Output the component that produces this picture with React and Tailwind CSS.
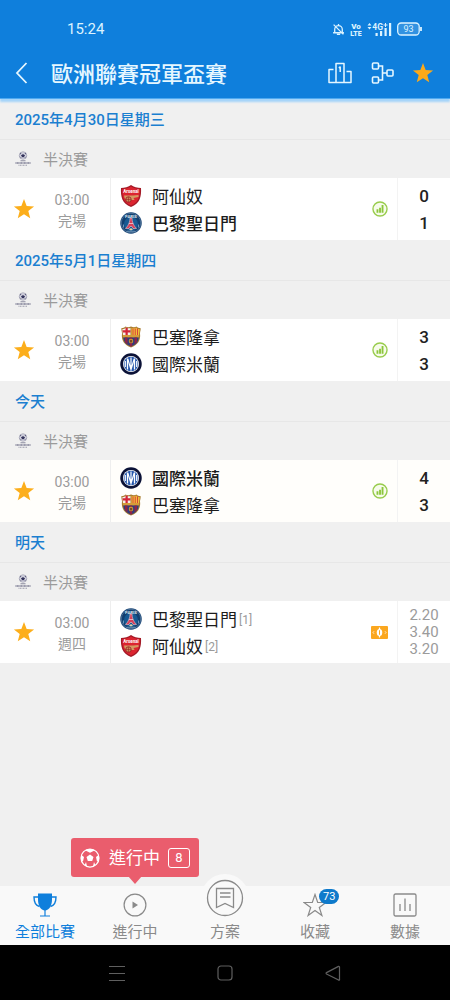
import React from "react";

const STAR = "M12 1.2 14.9 8.7 23 9.2 16.7 14.3 18.8 22.2 12 17.8 5.2 22.2 7.3 14.3 1 9.2 9.1 8.7Z";

function Star({ className }) {
  return (
    <svg viewBox="0 0 24 24" className={className} aria-hidden="true">
      <path d={STAR} fill="currentColor" />
    </svg>
  );
}

function Arsenal() {
  return (
    <svg viewBox="0 0 44 44" className="size-[22px]" aria-hidden="true">
      <path d="M2 6C9 6 17 4 22 0c5 4 13 6 20 6 1 17-2 31-20 38C4 37 1 23 2 6Z" fill="#a31a26" />
      <path d="M4.500 8C11 8 18 6 22 3c4 3 11 5 17.500 5C40 23 37 35 22 41 7 35 4 23 4.500 8Z" fill="#dc2430" />
      <text x="22" y="15.500" textAnchor="middle" fontSize="9" fontWeight="700" fill="#fff" fontFamily="Roboto, sans-serif">Arsenal</text>
      <path d="M8 21h18l11-1v4l-10 2 2 4H13l-4-4Z" fill="#d59a62" />
      <circle cx="17" cy="29" r="5.500" fill="#c98d55" stroke="#8f1720" strokeWidth="1.500" />
      <path d="M17 24v10M12 29h10" stroke="#8f1720" strokeWidth="1" />
    </svg>
  );
}

function Paris() {
  return (
    <svg viewBox="0 0 44 44" className="size-[22px]" aria-hidden="true">
      <circle cx="22" cy="22" r="21.500" fill="#123f70" />
      <circle cx="22" cy="22" r="19.500" fill="none" stroke="#7f9dba" strokeWidth="1" />
      <circle cx="22" cy="24" r="14" fill="#175a93" />
      <text x="22" y="11.500" textAnchor="middle" fontSize="8.500" fontWeight="700" fill="#dfe8f1" fontFamily="Roboto, sans-serif">PARIS</text>
      <path d="M20 12h4c0 8 3 15 9 21h-7l-2-4h-4l-2 4h-7c6-6 9-13 9-21Z" fill="#d5405a" stroke="#f0d9df" strokeWidth="1" />
      <path d="M17.500 23h9" stroke="#f3d7dc" strokeWidth="1.500" />
      <path d="m18 35 4-3 4 3-4 2Z" fill="#dfd3a5" />
      <path d="M7 25v6M37 25v6M13 38.500h18" stroke="#8fb3d2" strokeWidth="1.500" />
    </svg>
  );
}

function Barcelona() {
  return (
    <svg viewBox="0 0 44 44" className="size-[22px]" aria-hidden="true">
      <path d="M3 4c3 0 6-1 8-3 3 2 7 2 11 0 4 2 8 2 11 0 2 2 5 3 8 3 1 4-1 7-1 11 2 14-5 23-18 28C9 38 2 29 4 15 4 11 2 8 3 4Z" fill="#a97c30" />
      <path d="M5 6c3 0 5-1 7-3 3 2 6 2 9 1v14H6C6 13 4 11 5 6Z" fill="#f4efe8" />
      <path d="M11 3.500h4.500V18H11ZM5 8.500h16v4.500H5.500Z" fill="#d32638" />
      <path d="M23 4c3 1 6 1 9-1 2 2 4 3 7 3 1 4-1 6-1 12H23Z" fill="#f2bd3a" />
      <path d="M25 5h2v13h-2ZM29.500 5h2v13h-2ZM34 5h2v13h-2Z" fill="#d8443a" />
      <path d="M6 18h32v5H6Z" fill="#d59c38" />
      <path d="M6.500 23h31C37 32 31 38 22 41 13 38 7 32 6.500 23Z" fill="#2c3f7c" />
      <path d="M10 23h5v14l-5-5ZM19.500 23h5v17l-2.500 1-2.500-1ZM29 23h5v9l-5 5Z" fill="#8f2347" />
      <circle cx="22" cy="30" r="4.500" fill="#dba43a" />
      <path d="m22 27 3 2-1 4h-4l-1-4Z" fill="#7b4a22" />
    </svg>
  );
}

function Inter() {
  return (
    <svg viewBox="0 0 44 44" className="size-[22px]" aria-hidden="true">
      <circle cx="22" cy="22" r="21.500" fill="#0b1237" />
      <circle cx="22" cy="22" r="16" fill="#fff" />
      <circle cx="22" cy="22" r="14.500" fill="#2456ab" />
      <path d="M10.500 16v12M15 11v22M29 11v22M33.500 16v12" stroke="#fff" strokeWidth="2.600" />
      <path d="M22 9v26M15.500 12 22 33l6.500-21" stroke="#fff" strokeWidth="2.400" fill="none" />
    </svg>
  );
}

const TEAMS = {
  arsenal: { name: "阿仙奴", Logo: Arsenal },
  paris: { name: "巴黎聖日門", Logo: Paris },
  barcelona: { name: "巴塞隆拿", Logo: Barcelona },
  inter: { name: "國際米蘭", Logo: Inter },
};

const DAYS = [
  { date: "2025年4月30日星期三", status: "完場", teams: [{ id: "arsenal", score: 0 }, { id: "paris", score: 1, win: true }] },
  { date: "2025年5月1日星期四", status: "完場", teams: [{ id: "barcelona", score: 3 }, { id: "inter", score: 3 }] },
  { date: "今天", status: "完場", recent: true, teams: [{ id: "inter", score: 4, win: true }, { id: "barcelona", score: 3 }] },
  { date: "明天", status: "週四", odds: ["2.20", "3.40", "3.20"], teams: [{ id: "paris", seed: 1 }, { id: "arsenal", seed: 2 }] },
];

function ChampionsLogo() {
  return (
    <svg viewBox="0 0 32 32" className="size-4" aria-hidden="true">
      <circle cx="16" cy="9" r="7.500" fill="#dcdce6" stroke="#77778f" strokeWidth="1" />
      <path d="m16 5 1.500 2.500 3 .5-2 2.500.5 3-3-1.500-3 1.500.5-3-2-2.500 3-.5ZM10 4l3 1-2 2ZM22 4l-3 1 2 2ZM9 11l2 1v2ZM23 11l-2 1v2Z" fill="#34345c" />
      <path d="M11 19.500h10" stroke="#8b8b9f" strokeWidth="2" />
      <path d="M1 24h30" stroke="#74748d" strokeWidth="3" strokeDasharray="2 .8" />
      <path d="M7 28.500h18" stroke="#9a9aab" strokeWidth="2" strokeDasharray="2 1" />
    </svg>
  );
}

function StatsIcon() {
  return (
    <svg viewBox="0 0 30 30" className="size-4" aria-hidden="true">
      <circle cx="15" cy="15" r="13.200" fill="#f6fbea" stroke="#98cc4c" strokeWidth="2.600" />
      <path d="M8.500 15.500H12V22H8.500ZM13.300 12.500h3.500V22h-3.500ZM18 7.500h3.500V22H18Z" fill="#8cc63c" />
    </svg>
  );
}

function OddsIcon() {
  return (
    <svg viewBox="0 0 34 26" className="h-[13px] w-[17px]" aria-hidden="true">
      <rect width="34" height="26" rx="2" fill="#fba71f" />
      <ellipse cx="17" cy="13" rx="5.500" ry="7" fill="#fff" />
      <path d="M17 3v20" stroke="#fff" strokeWidth="2.500" />
      <path d="M17 8.500v9" stroke="#fba71f" strokeWidth="2" />
      <path d="m6 10.500-2 2.500 2 2.500M28 10.500l2 2.500-2 2.500" stroke="#fff" strokeWidth="1.500" fill="none" />
    </svg>
  );
}

function Match({ match }) {
  return (
    <article className={`flex h-[62px] items-stretch ${match.recent ? "bg-[#fffefb]" : "bg-white"}`}>
      <div className="flex w-[111px] shrink-0 items-center border-r border-[#eeeeee]">
        <button type="button" aria-label="收藏" className="flex w-12 justify-center text-[#fcae1b]">
          <Star className="size-[22px]" />
        </button>
        <div className="w-12 pt-[3px] text-center text-sm leading-[21px] text-[#9b9b9b]">
          <p>03:00</p>
          <p>{match.status}</p>
        </div>
      </div>
      <div className="flex min-w-0 flex-1 flex-col justify-center pl-[9px]">
        {match.teams.map((t) => {
          const { name, Logo } = TEAMS[t.id];
          return (
            <div key={t.id} className="flex h-[27px] items-center">
              <Logo />
              <span className={`ml-[10px] whitespace-nowrap pt-[3px] text-[17px] leading-6 text-[#1c1c1c] ${t.win ? "font-medium" : "font-normal"}`}>{name}</span>
              {t.seed && <span className="ml-0.5 pt-[3px] text-xs text-[#9b9b9b]">[{t.seed}]</span>}
            </div>
          );
        })}
      </div>
      <div className="flex w-[35px] shrink-0 items-center justify-center">{match.odds ? <OddsIcon /> : <StatsIcon />}</div>
      {match.odds ? (
        <div className="flex w-[53px] shrink-0 flex-col justify-center border-l border-[#f3f3f3] pt-px text-center text-[15px] leading-[17px] text-[#9b9b9b]">
          {match.odds.map((o) => <p key={o}>{o}</p>)}
        </div>
      ) : (
        <div className="flex w-[53px] shrink-0 flex-col justify-center border-l border-[#f3f3f3] pt-px text-center text-[17px] font-medium leading-[27px] text-[#222222]">
          {match.teams.map((t) => <p key={t.id}>{t.score}</p>)}
        </div>
      )}
    </article>
  );
}

function StatusBar() {
  return (
    <div className="flex h-12 items-center pl-[67px] pr-7 pt-2.5 text-[#dcf3ff]">
      <span className="text-[15px] leading-5">15:24</span>
      <div className="ml-auto flex items-center gap-[5px]">
        <svg viewBox="0 0 24 24" className="size-[13px]" fill="none" stroke="currentColor" strokeWidth="2.400" aria-hidden="true">
          <path d="M12 2v3M5 18V12a7 7 0 0 1 14 0v6M2 18h20M9 21h6M3 3l18 18" />
        </svg>
        <svg viewBox="0 0 12 14" className="h-[14px] w-3" fill="currentColor" fontFamily="Roboto, sans-serif" fontWeight="900" aria-hidden="true">
          <text x="6" y="6.500" fontSize="8" textAnchor="middle">Vo</text>
          <text x="6" y="13.500" fontSize="7" textAnchor="middle">LTE</text>
        </svg>
        <svg viewBox="0 0 25 14" className="h-[14px] w-[25px]" fill="currentColor" aria-hidden="true">
          <path d="m2.500 1 2 2.500h-4ZM2.500 7.500l2-2.500h-4ZM8.500 11h2.200v3H8.500ZM13 9h2.200v5H13ZM17.500 6h2.200v8h-2.200ZM22 1h2.200v13H22Z" />
          <text x="5.300" y="7.500" fontSize="8.500" fontWeight="700" fontFamily="Roboto, sans-serif">4G</text>
          <path d="M16.500 3h4M18.500 1v4" stroke="currentColor" strokeWidth="1" />
        </svg>
        <svg viewBox="0 0 25 14" className="h-[14px] w-[25px]" fill="none" stroke="currentColor" aria-hidden="true">
          <rect x=".7" y="1" width="21.500" height="12" rx="3.500" strokeWidth="1.300" fill="#fff" fillOpacity=".15" />
          <path d="M24 5v4" strokeWidth="1.800" />
          <text x="11.500" y="10.300" textAnchor="middle" fontSize="9" fill="currentColor" stroke="none" fontFamily="Roboto, sans-serif">93</text>
        </svg>
      </div>
    </div>
  );
}

function Header() {
  return (
    <header className="relative z-10 border-b border-[#4fa9f0] bg-[#0f7fdc] shadow-[0_3px_2px_#a3d4fa]">
      <StatusBar />
      <div className="flex h-[50px] items-center pl-3 pr-4 text-[#e6f7ff]">
        <button type="button" aria-label="返回" className="flex w-[39px] items-center">
          <svg viewBox="0 0 20 24" className="h-6 w-5" fill="none" stroke="currentColor" strokeWidth="1.800" aria-hidden="true">
            <path d="M14.500 2 5 12l9.500 10" />
          </svg>
        </button>
        <h1 className="whitespace-nowrap pt-[3px] text-[22px] font-medium leading-8">歐洲聯賽冠軍盃賽</h1>
        <div className="ml-auto flex items-center gap-[18px]">
          <button type="button" aria-label="排名">
            <svg viewBox="0 0 24 22" className="h-[22px] w-6" fill="none" stroke="currentColor" strokeWidth="1.500" aria-hidden="true">
              <path d="M8 20.500V1.500h8v19M5.500 7.500H1v13h22V9.500h-4.500M10.800 5.800 12.200 5v5" strokeLinejoin="round" />
            </svg>
          </button>
          <button type="button" aria-label="賽程圖">
            <svg viewBox="0 0 24 22" className="h-[22px] w-6" fill="none" stroke="currentColor" strokeWidth="1.600" aria-hidden="true">
              <rect x="2.500" y="1" width="6" height="6" rx="1" />
              <rect x="2.500" y="15" width="6" height="6" rx="1" />
              <rect x="17" y="8" width="6" height="6" rx="1" />
              <path d="M8.500 4h4v14h-4M12.500 11H17" />
            </svg>
          </button>
          <button type="button" aria-label="收藏賽事" className="text-[#fba919]">
            <Star className="size-[22px]" />
          </button>
        </div>
      </div>
    </header>
  );
}

function LivePopup() {
  return (
    <button type="button" className="absolute bottom-full left-1/2 mb-[9px] flex h-[39px] -translate-x-1/2 items-center whitespace-nowrap rounded-[3px] bg-[#ea5d6d] px-[9px] text-white">
      <svg viewBox="0 0 40 40" className="size-5" aria-hidden="true">
        <circle cx="20" cy="20" r="18" fill="#ea5d6d" stroke="#fff" strokeWidth="2.500" />
        <path d="m20 13 7 5-2.600 8h-8.800L13 18ZM11 5l9 4.500L29 5l-4-3H15ZM38 13l-6 5 2 9 4-2ZM2 13l6 5-2 9-4-2ZM9 35l3-7 2 9ZM31 35l-3-7-2 9Z" fill="#fff" />
      </svg>
      <span className="ml-[9px] pt-px text-[17px] leading-6">進行中</span>
      <span className="ml-2 flex h-5 w-[22px] items-center justify-center rounded-[3px] border border-white text-[13px]">8</span>
      <svg viewBox="0 0 14 8" className="absolute left-1/2 top-full h-[7px] w-[14px] -translate-x-1/2" aria-hidden="true">
        <path d="M0 0h14L7 8Z" fill="#ea5d6d" />
      </svg>
    </button>
  );
}

function NavItem({ label, active, children, popup }) {
  return (
    <div className="relative">
      {popup}
      <a href="#" className={`flex flex-col items-center pt-[7px] ${active ? "text-[#0f7fdc]" : "text-[#8a8a8a]"}`}>
        <span className="relative flex h-6 items-center justify-center">{children}</span>
        <span className="mt-1 whitespace-nowrap text-[15px] leading-[22px]">{label}</span>
      </a>
    </div>
  );
}

function BottomNav() {
  return (
    <nav className="grid grid-cols-5 bg-[#f9f9f9] pb-0.5">
      <NavItem label="全部比賽" active>
        <svg viewBox="0 0 24 24" className="size-6" aria-hidden="true">
          <path d="M5 .5h14v6c0 6-2.500 10-6.400 11v5H17v1H7v-1h4.400v-5C7.500 16.500 5 12.500 5 6.500Z" fill="currentColor" />
          <path d="M5 4H1c0 5 1 8.500 5.500 9.500M19 4h4c0 5-1 8.500-5.500 9.500" fill="none" stroke="currentColor" strokeWidth="1.400" />
        </svg>
      </NavItem>
      <NavItem label="進行中" popup={<LivePopup />}>
        <svg viewBox="0 0 24 24" className="size-6" aria-hidden="true">
          <circle cx="12" cy="12" r="10.900" fill="none" stroke="currentColor" strokeWidth="1.200" />
          <path d="M9.500 8.500v7l5.500-3.500Z" fill="currentColor" />
        </svg>
      </NavItem>
      <NavItem label="方案">
        <span className="absolute -top-[19px] flex size-12 items-center justify-center rounded-full bg-[#f9f9f9]">
          <svg viewBox="0 0 38 38" className="size-[38px]" fill="none" stroke="currentColor" strokeWidth="1.300" aria-hidden="true">
            <circle cx="19" cy="19" r="17.500" />
            <path d="M10.500 9.500h17v19L19 24.500l-8.500 4ZM14 14h10.500M14 18h10.500" />
          </svg>
        </span>
      </NavItem>
      <NavItem label="收藏">
        <svg viewBox="0 0 24 24" className="size-6" fill="none" stroke="currentColor" strokeWidth="1.200" aria-hidden="true">
          <path d="m12 1.500 2.700 8H23l-6.700 4.900 2.600 8.100-6.900-5-6.900 5 2.600-8.100L1 9.500h8.300Z" />
        </svg>
        <span className="absolute -top-1 left-4 rounded-full bg-[#0f7acb] px-1 text-[11px] leading-[15px] text-white">73</span>
      </NavItem>
      <NavItem label="數據">
        <svg viewBox="0 0 24 24" className="size-6" fill="none" stroke="currentColor" strokeWidth="1.300" aria-hidden="true">
          <rect x="1" y="1" width="22" height="22" rx="1.500" />
          <path d="M7 11v7M12 5.500V18M17 11v7" />
        </svg>
      </NavItem>
    </nav>
  );
}

function SystemBar() {
  return (
    <div className="grid h-[55px] grid-cols-[1fr_108px_108px_108px_1fr] place-items-center bg-black text-[#5f5f5f]">
      <button type="button" aria-label="最近" className="col-start-2">
        <svg viewBox="0 0 16 16" className="size-4" stroke="currentColor" aria-hidden="true"><path d="M0 1.500h16M0 8.500h16M0 15.500h16" /></svg>
      </button>
      <button type="button" aria-label="主頁">
        <svg viewBox="0 0 16 16" className="size-4" fill="none" stroke="currentColor" aria-hidden="true"><rect x="1" y="1" width="14" height="14" rx="3" strokeWidth="1.200" /></svg>
      </button>
      <button type="button" aria-label="返回">
        <svg viewBox="0 0 16 16" className="size-4" fill="none" stroke="currentColor" aria-hidden="true"><path d="M14.500 2v12.500a.5.5 0 0 1-1 .4L1.500 9a.8.8 0 0 1 0-1.400l12-6.200a.7.7 0 0 1 1 .6Z" strokeWidth="1.200" /></svg>
      </button>
    </div>
  );
}

export default function App() {
  return (
    <div className="flex min-h-screen flex-col bg-[#f0f0f0] font-['Roboto','Noto_Sans_CJK_TC',sans-serif]" lang="zh-Hant">
      <Header />
      <main className="flex-1">
        {DAYS.map((day) => (
          <section key={day.date}>
            <h2 className="flex h-[41px] items-center border-b border-[#e7e7e7] pl-[15px] pt-[3px] text-[15px] font-medium text-[#1b7fd0]">{day.date}</h2>
            <div className="flex h-[38px] items-center gap-3 pl-[15px] text-[15px] text-[#9b9b9b]">
              <ChampionsLogo />
              <span className="pt-0.5">半決賽</span>
            </div>
            <Match match={day} />
          </section>
        ))}
      </main>
      <BottomNav />
      <SystemBar />
    </div>
  );
}
